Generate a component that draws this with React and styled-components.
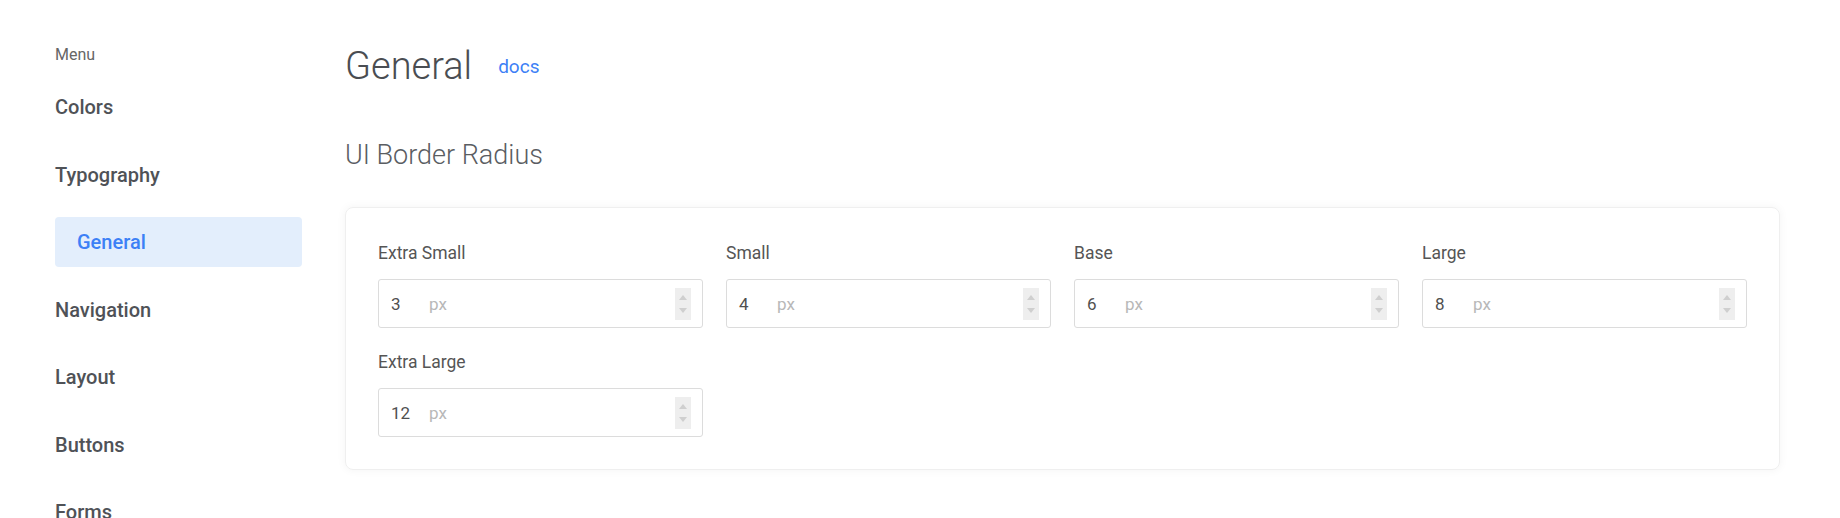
import React from 'react';
import styled, { createGlobalStyle } from 'styled-components';

const GlobalStyle = createGlobalStyle`
  body {
    margin: 0;
    background: #ffffff;
    font-family: Roboto, 'Liberation Sans', sans-serif;
    color: #444;
  }
`;

const Page = styled.div`
  display: flex;
  align-items: flex-start;
  gap: 43px;
  padding: 45px 60px 0 55px;
  height: 518px;
  box-sizing: border-box;
  overflow: hidden;
`;

const Sidebar = styled.nav`
  width: 247px;
  flex-shrink: 0;
  display: flex;
  flex-direction: column;
`;

const MenuTitle = styled.div`
  font-size: 16px;
  line-height: 20px;
  color: #666;
  margin-bottom: 17px;
`;

const NavItem = styled.div`
  height: 50px;
  margin-bottom: 17.5px;
  display: flex;
  align-items: center;
  padding-left: ${(props) => (props.active ? '22px' : '0')};
  border-radius: 4px;
  font-size: 20px;
  font-weight: 500;
  color: ${(props) => (props.active ? '#3c80f6' : '#4f5257')};
  background: ${(props) => (props.active ? '#e3eefc' : 'transparent')};
`;

const Main = styled.main`
  flex: 1;
  min-width: 0;
`;

const TitleRow = styled.div`
  display: flex;
  align-items: center;
  gap: 26px;
  height: 42px;
`;

const Title = styled.h1`
  margin: 0;
  font-size: 38px;
  line-height: 42px;
  font-weight: 300;
  color: #4a4d52;
`;

const DocsLink = styled.a`
  font-size: 19px;
  color: #3c80f6;
  text-decoration: none;
`;

const SectionTitle = styled.h2`
  margin: 53px 0 0;
  font-size: 27px;
  line-height: 30px;
  font-weight: 300;
  color: #5a5d62;
`;

const Card = styled.div`
  margin-top: 37px;
  border: 1px solid #efefef;
  border-radius: 8px;
  box-shadow: 0 0 10px rgba(0, 0, 0, 0.05);
  padding: 33px 32px 32px;
  display: grid;
  grid-template-columns: repeat(4, 1fr);
  column-gap: 23px;
  row-gap: 22px;
`;

const Field = styled.div`
  display: flex;
  flex-direction: column;
`;

const Label = styled.label`
  font-size: 17.5px;
  line-height: 24px;
  color: #555;
  margin-bottom: 14px;
`;

const InputBox = styled.div`
  height: 49px;
  box-sizing: border-box;
  border: 1px solid #dcdcdc;
  border-radius: 3px;
  display: flex;
  align-items: center;
  padding: 0 11px 0 12px;
  font-size: 17px;
`;

const Value = styled.span`
  color: #505050;
  width: 38px;
`;

const Unit = styled.span`
  color: #b8b8b8;
  flex: 1;
`;

const Spinner = styled.div`
  width: 16px;
  height: 32px;
  background: #eeeeee;
  display: flex;
  flex-direction: column;
  align-items: center;
  justify-content: space-around;
  padding: 3px 0;
  box-sizing: border-box;
`;

const Arrow = styled.span`
  width: 0;
  height: 0;
  border-left: 4px solid transparent;
  border-right: 4px solid transparent;
  ${(props) =>
    props.down
      ? 'border-top: 5px solid #cfcfcf;'
      : 'border-bottom: 5px solid #cfcfcf;'}
`;

const menu = [
  'Colors',
  'Typography',
  'General',
  'Navigation',
  'Layout',
  'Buttons',
  'Forms',
];

const radii = [
  { label: 'Extra Small', value: 3 },
  { label: 'Small', value: 4 },
  { label: 'Base', value: 6 },
  { label: 'Large', value: 8 },
  { label: 'Extra Large', value: 12 },
];

const App = () => {
  return (
    <React.Fragment>
      <GlobalStyle />
      <Page>
        <Sidebar>
          <MenuTitle>Menu</MenuTitle>
          {menu.map((item) => (
            <NavItem key={item} active={item === 'General'}>
              {item}
            </NavItem>
          ))}
        </Sidebar>
        <Main>
          <TitleRow>
            <Title>General</Title>
            <DocsLink href='#'>docs</DocsLink>
          </TitleRow>
          <SectionTitle>UI Border Radius</SectionTitle>
          <Card>
            {radii.map((r) => (
              <Field key={r.label}>
                <Label>{r.label}</Label>
                <InputBox>
                  <Value>{r.value}</Value>
                  <Unit>px</Unit>
                  <Spinner>
                    <Arrow />
                    <Arrow down />
                  </Spinner>
                </InputBox>
              </Field>
            ))}
          </Card>
        </Main>
      </Page>
    </React.Fragment>
  );
};

export default App;
